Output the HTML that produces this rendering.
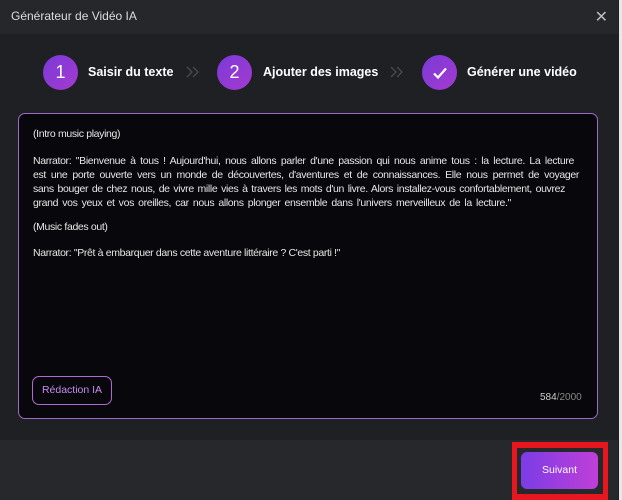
<!DOCTYPE html>
<html><head><meta charset="utf-8"><style>
*{margin:0;padding:0;box-sizing:border-box}
body{width:622px;height:500px;background:#1f2024;font-family:"Liberation Sans",sans-serif;position:relative;overflow:hidden;color:#fff}
.title{position:absolute;left:0;top:0;width:618px;height:34px;background:#26272b;font-size:12px;color:#ddd;padding:9px 0 0 11px}
.x{position:absolute;right:14px;top:7px;font-size:16px;color:#bbb}
.edge{position:absolute;right:0;top:0;width:3px;height:500px;background:#e8e8e8}
.circ{position:absolute;top:55px;width:35px;height:35px;border-radius:50%;background:linear-gradient(135deg,#7a3ad8,#a43ad0);font-size:18px;text-align:center;line-height:35px}
.lab{position:absolute;top:65px;font-size:12.5px;font-weight:bold}
.chev{position:absolute;top:65px}
.ta{position:absolute;left:18px;top:113px;width:580px;height:306px;border:1.5px solid #9b6bc6;border-radius:7px;background:#08080c}
.t{position:absolute;left:33px;font-size:10.5px;letter-spacing:-0.35px;color:#e6e6e6;white-space:nowrap;text-align-last:justify;height:14px}
.btn1{position:absolute;left:32px;top:376px;width:80px;height:29px;border:1.5px solid #b06ad8;border-radius:7px;color:#c88cf0;font-size:10.5px;text-align:center;line-height:26px}
.cnt{position:absolute;left:540px;top:392px;font-size:10px;color:#888}
.cnt b{color:#ccc;font-weight:normal}
.foot{position:absolute;left:0;top:440px;width:618px;height:60px;background:#27282c}
.red{position:absolute;left:512px;top:442px;width:96px;height:58px;background:#e8161f}
.red2{position:absolute;left:517px;top:448px;width:86px;height:46px;background:#27282c}
.sv{position:absolute;left:521px;top:452px;width:77px;height:37px;border-radius:6px;background:linear-gradient(90deg,#7b3ce6,#c03fd8);font-size:10.5px;text-align:center;line-height:37px}
</style></head><body>
<div class="title">Générateur de Vidéo IA</div><div class="x">✕</div>
<div class="circ" style="left:43px">1</div><div class="lab" style="left:88px">Saisir du texte</div>
<svg class="chev" style="left:185px" width="16" height="14" viewBox="0 0 16 14"><path d="M2 2l5 5-5 5M8 2l5 5-5 5" stroke="#4a4a50" stroke-width="1.3" fill="none"/></svg>
<div class="circ" style="left:217px">2</div><div class="lab" style="left:263px">Ajouter des images</div>
<svg class="chev" style="left:389px" width="16" height="14" viewBox="0 0 16 14"><path d="M2 2l5 5-5 5M8 2l5 5-5 5" stroke="#4a4a50" stroke-width="1.3" fill="none"/></svg>
<div class="circ" style="left:422px"><svg width="16" height="16" viewBox="0 0 16 16" style="margin-top:10px"><path d="M2 8.5l4 4 8-9" stroke="#fff" stroke-width="2.2" fill="none"/></svg></div><div class="lab" style="left:467px">Générer une vidéo</div>
<div class="ta"></div>
<div class="t" style="top:128px">(Intro music playing)</div>
<div class="t" style="top:155px;width:541px">Narrator: "Bienvenue à tous ! Aujourd'hui, nous allons parler d'une passion qui nous anime tous : la lecture. La lecture</div>
<div class="t" style="top:169px;width:546px">est une porte ouverte vers un monde de découvertes, d'aventures et de connaissances. Elle nous permet de voyager</div>
<div class="t" style="top:183px;width:532px">sans bouger de chez nous, de vivre mille vies à travers les mots d'un livre. Alors installez-vous confortablement, ouvrez</div>
<div class="t" style="top:197px;width:478px">grand vos yeux et vos oreilles, car nous allons plonger ensemble dans l'univers merveilleux de la lecture."</div>
<div class="t" style="top:221px">(Music fades out)</div>
<div class="t" style="top:247px;width:296px">Narrator: "Prêt à embarquer dans cette aventure littéraire ? C'est parti !"</div>
<div class="btn1">Rédaction IA</div>
<div class="cnt"><b>584</b>/2000</div>
<div class="foot"></div>
<div class="red"></div><div class="red2"></div>
<div class="sv">Suivant</div>
<div class="edge"></div>
</body></html>
